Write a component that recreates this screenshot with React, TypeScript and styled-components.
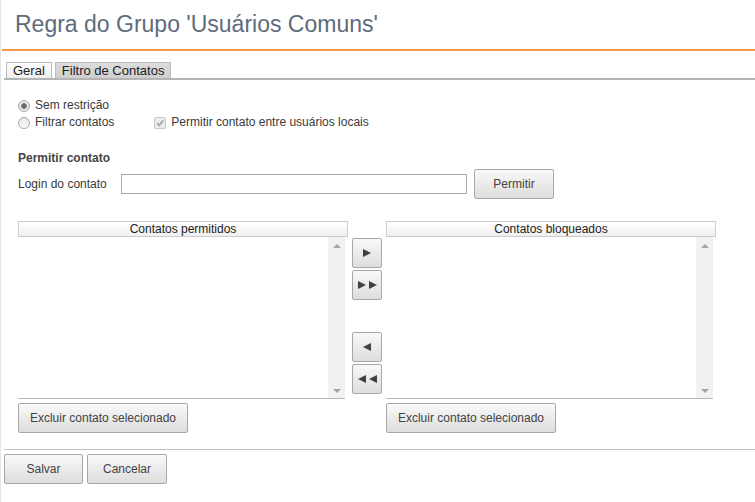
import React, { FunctionComponent } from "react";
import styled, { createGlobalStyle } from "styled-components";

const GlobalStyle = createGlobalStyle`
  html, body {
    margin: 0;
    padding: 0;
    background: #fff;
  }
  body {
    font-family: "Liberation Sans", Arial, sans-serif;
    font-size: 12px;
    color: #3a3a3a;
  }
`

const Page = styled.div`
  min-height: 502px;
  border-left: 1px solid #e6e6e6;
  box-sizing: border-box;
`

const Header = styled.div`
  margin-left: 1px;
  padding: 11px 0 12px 13px;
  border-bottom: 2px solid #f59a4a;
`

const Title = styled.h1`
  margin: 0;
  font-size: 23px;
  line-height: 26px;
  font-weight: normal;
  color: #5e6b7c;
`

const Body = styled.div`
  padding-left: 3px;
`

const TabBar = styled.div`
  display: flex;
  gap: 3px;
  margin-top: 11px;
  padding-left: 2px;
  border-bottom: 2px solid #b4b4b4;
`

const Tab = styled.div<{ $active?: boolean }>`
  padding: 0 6px;
  height: 15px;
  line-height: 15px;
  font-size: 13px;
  color: #222;
  border: 1px solid #bdbdbd;
  border-bottom: none;
  background: ${p => p.$active
    ? "linear-gradient(#dcdcdc, #cfcfcf)"
    : "linear-gradient(#fdfdfd, #efefef)"};
`

const Content = styled.div`
  padding: 17px 0 0 14px;
`

const OptionRow = styled.div`
  display: flex;
  align-items: center;
  height: 17px;
  line-height: 17px;
`

const Option = styled.label<{ $offset?: number }>`
  display: flex;
  align-items: center;
  gap: 5px;
  margin-left: ${p => p.$offset || 0}px;
`

const Radio = styled.span<{ $checked?: boolean }>`
  display: inline-block;
  width: 10px;
  height: 10px;
  border-radius: 50%;
  border: 1px solid #a6a6a6;
  background: ${p => p.$checked
    ? "radial-gradient(circle, #6a6a6a 0 2.4px, #d9d9d9 3px, #f4f4f4 5px)"
    : "linear-gradient(#e6e6e6, #fafafa)"};
`

const CheckBox = styled.span`
  position: relative;
  display: inline-block;
  width: 10px;
  height: 10px;
  border: 1px solid #c9c9c9;
  border-radius: 2px;
  background: #ececec;
  svg {
    position: absolute;
    left: 0;
    top: 0;
  }
`

const SectionTitle = styled.div`
  margin-top: 19px;
  font-weight: bold;
  line-height: 17px;
  color: #444;
`

const LoginRow = styled.div`
  display: flex;
  align-items: center;
  margin-top: 2px;
`

const LoginLabel = styled.span`
  width: 103px;
`

const LoginInput = styled.input`
  width: 346px;
  height: 20px;
  box-sizing: border-box;
  border: 1px solid #a9a9a9;
  padding: 0 3px;
  font-family: inherit;
  font-size: 12px;
`

const Button = styled.button<{ $width: number; $gap?: number }>`
  width: ${p => p.$width}px;
  height: 30px;
  margin-left: ${p => p.$gap || 0}px;
  padding: 0;
  border: 1px solid #a8a8a8;
  border-radius: 2px;
  background: linear-gradient(#f9f9f9, #dddddd);
  font-family: "Liberation Sans", Arial, sans-serif;
  font-size: 12px;
  color: #444;
`

const Lists = styled.div`
  display: flex;
  margin-top: 22px;
`

const ListColumn = styled.div`
  width: 330px;
  display: flex;
  flex-direction: column;
`

const ListHeader = styled.div`
  height: 14px;
  line-height: 14px;
  border: 1px solid #cccccc;
  text-align: center;
  color: #222;
  background: linear-gradient(#ffffff, #efefef);
`

const ListBody = styled.div`
  width: 327px;
  height: 161px;
  display: flex;
  justify-content: flex-end;
  border-bottom: 1px solid #b9b9b9;
`

const ScrollTrack = styled.div`
  width: 17px;
  display: flex;
  flex-direction: column;
  justify-content: space-between;
  align-items: center;
  padding: 7px 0 5px;
  background: #f1f1f1;
`

const ScrollArrow = styled.span<{ $down?: boolean }>`
  width: 0;
  height: 0;
  border-left: 4px solid transparent;
  border-right: 4px solid transparent;
  ${p => p.$down
    ? "border-top: 4px solid #a3a3a3;"
    : "border-bottom: 4px solid #a3a3a3;"}
`

const ListFooter = styled.div`
  margin-top: 4px;
`

const MoveColumn = styled.div`
  width: 30px;
  margin: 0 4px;
  padding-top: 17px;
  display: flex;
  flex-direction: column;
  gap: 2px;
`

const MoveButton = styled.button<{ $spaced?: boolean }>`
  width: 30px;
  height: 30px;
  padding: 0;
  margin-top: ${p => p.$spaced ? 30 : 0}px;
  display: flex;
  align-items: center;
  justify-content: center;
  gap: 3px;
  border: 1px solid #a8a8a8;
  border-radius: 2px;
  background: linear-gradient(#f9f9f9, #dddddd);
`

const Footer = styled.div`
  margin-top: 16px;
  border-top: 1px solid #c2c2c2;
  padding-top: 4px;
  display: flex;
`

const Arrow: FunctionComponent<{ left?: boolean }> = ({ left }) => (
  <svg width="8" height="8" viewBox="0 0 8 8">
    <path d={left ? "M8 0 L8 8 L0 4 Z" : "M0 0 L0 8 L8 4 Z"} fill="#404040" />
  </svg>
)

const ContactList: FunctionComponent<{ title: string }> = ({ title }) => (
  <ListColumn>
    <ListHeader>{title}</ListHeader>
    <ListBody>
      <ScrollTrack>
        <ScrollArrow />
        <ScrollArrow $down />
      </ScrollTrack>
    </ListBody>
    <ListFooter>
      <Button $width={170}>Excluir contato selecionado</Button>
    </ListFooter>
  </ListColumn>
)

const App: FunctionComponent = () => {
  return <Page>
    <GlobalStyle />
    <Header>
      <Title>Regra do Grupo 'Usuários Comuns'</Title>
    </Header>
    <Body>
      <TabBar>
        <Tab>Geral</Tab>
        <Tab $active>Filtro de Contatos</Tab>
      </TabBar>
      <Content>
        <OptionRow>
          <Option><Radio $checked />Sem restrição</Option>
        </OptionRow>
        <OptionRow>
          <Option><Radio />Filtrar contatos</Option>
          <Option $offset={40}>
            <CheckBox>
              <svg width="10" height="10" viewBox="0 0 10 10">
                <path d="M2 5.2 L4.2 7.4 L8.2 2.4" stroke="#a9a9a9" strokeWidth="1.8" fill="none" />
              </svg>
            </CheckBox>
            Permitir contato entre usuários locais
          </Option>
        </OptionRow>
        <SectionTitle>Permitir contato</SectionTitle>
        <LoginRow>
          <LoginLabel>Login do contato</LoginLabel>
          <LoginInput type="text" />
          <Button $width={80} $gap={7}>Permitir</Button>
        </LoginRow>
        <Lists>
          <ContactList title="Contatos permitidos" />
          <MoveColumn>
            <MoveButton><Arrow /></MoveButton>
            <MoveButton><Arrow /><Arrow /></MoveButton>
            <MoveButton $spaced><Arrow left /></MoveButton>
            <MoveButton><Arrow left /><Arrow left /></MoveButton>
          </MoveColumn>
          <ContactList title="Contatos bloqueados" />
        </Lists>
      </Content>
      <Footer>
        <Button $width={79}>Salvar</Button>
        <Button $width={80} $gap={4}>Cancelar</Button>
      </Footer>
    </Body>
  </Page>
}

export default App
